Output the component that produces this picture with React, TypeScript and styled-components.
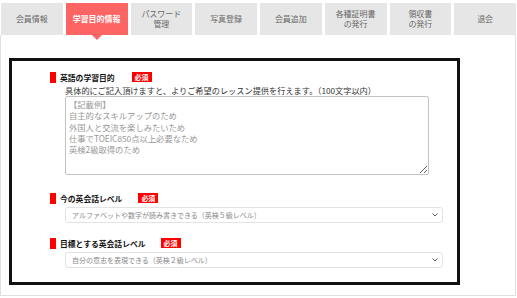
import React from 'react';
import styled, { createGlobalStyle } from 'styled-components';

const GlobalStyle = createGlobalStyle`
  html, body {
    margin: 0;
    padding: 0;
    background: #fff;
  }
  body {
    font-family: "Noto Sans CJK JP", "Noto Sans", sans-serif;
    color: #333;
  }
`;

const Page = styled.div`
  width: 517px;
  padding-top: 3px;
  box-sizing: border-box;
`;

const Tabs = styled.div`
  display: grid;
  grid-template-columns: repeat(8, 1fr);
  column-gap: 3px;
  margin: 0 1px 0 1px;
  height: 32px;
`;

const Tab = styled.div<{ $active?: boolean }>`
  position: relative;
  display: flex;
  align-items: center;
  justify-content: center;
  text-align: center;
  font-size: 8px;
  line-height: 10px;
  background: ${(p) => (p.$active ? '#fd6464' : '#e6e6e6')};
  color: ${(p) => (p.$active ? '#fff' : '#666')};
  font-weight: ${(p) => (p.$active ? 700 : 400)};

  &::after {
    content: '';
    display: ${(p) => (p.$active ? 'block' : 'none')};
    position: absolute;
    left: 50%;
    bottom: -5px;
    margin-left: -5px;
    border-left: 5px solid transparent;
    border-right: 5px solid transparent;
    border-top: 5px solid #fd6464;
  }
`;

const Panel = styled.div`
  border: 1px solid #e0e0e0;
  border-top: none;
  margin-right: 1px;
  padding: 23px 8px 10px 8px;
`;

const FormBox = styled.div`
  width: 451px;
  height: 227px;
  box-sizing: border-box;
  border: 3px solid #111;
  padding: 10px 0 0 38px;
`;

const Section = styled.div<{ $gap?: number }>`
  margin-top: ${(p) => p.$gap ?? 0}px;
`;

const LabelRow = styled.div`
  display: flex;
  align-items: center;
  height: 12px;
`;

const Marker = styled.span`
  width: 6px;
  height: 11px;
  background: #f00;
  margin-right: 4px;
`;

const Label = styled.span`
  font-size: 7.8px;
  font-weight: 700;
  color: #111;
`;

const Required = styled.span<{ $gap: number }>`
  margin-left: ${(p) => p.$gap}px;
  background: #f00;
  color: #fff;
  font-size: 7px;
  font-weight: 700;
  line-height: 10px;
  padding: 0 3px;
`;

const Note = styled.div`
  margin: 1px 0 0 15px;
  font-size: 8.2px;
  line-height: 12px;
  color: #333;
`;

const TextBox = styled.textarea`
  display: block;
  margin-left: 15px;
  width: 364px;
  height: 79px;
  box-sizing: border-box;
  border: 1px solid #c4c4c4;
  border-radius: 2px;
  padding: 2px 3px;
  font-family: inherit;
  font-size: 8.3px;
  line-height: 11.3px;
  color: #333;
  &::placeholder {
    color: #999;
  }
`;

const SelectWrap = styled.div`
  position: relative;
  margin: 3px 0 0 15px;
  width: 378px;
  height: 16px;
`;

const Select = styled.select`
  display: block;
  appearance: none;
  width: 100%;
  height: 100%;
  box-sizing: border-box;
  border: 1px solid #e3e3e3;
  border-radius: 3px;
  background: #fff;
  padding: 0 0 0 6px;
  font-family: inherit;
  font-size: 7px;
  color: #888;
  outline: none;
`;

const Chevron = styled.svg`
  position: absolute;
  right: 5px;
  top: 6px;
  pointer-events: none;
`;

const tabs = [
  ['会員情報'],
  ['学習目的情報'],
  ['パスワード', '管理'],
  ['写真登録'],
  ['会員追加'],
  ['各種証明書', 'の発行'],
  ['領収書', 'の発行'],
  ['退会'],
];

const LevelSelect = ({ value }: { value: string }) => (
  <SelectWrap>
    <Select defaultValue={value}>
      <option>{value}</option>
    </Select>
    <Chevron width="6" height="4" viewBox="0 0 6 4">
      <path d="M0.5 0.5 L3 3 L5.5 0.5" fill="none" stroke="#555" strokeWidth="1" />
    </Chevron>
  </SelectWrap>
);

export default function App() {
  return (
    <Page>
      <GlobalStyle />
      <Tabs>
        {tabs.map((t, i) => (
          <Tab key={i} $active={i === 1}>
            <span>
              {t.map((line, j) => (
                <React.Fragment key={j}>
                  {j > 0 && <br />}
                  {line}
                </React.Fragment>
              ))}
            </span>
          </Tab>
        ))}
      </Tabs>
      <Panel>
        <FormBox>
          <Section>
            <LabelRow>
              <Marker />
              <Label>英語の学習目的</Label>
              <Required $gap={17}>必須</Required>
            </LabelRow>
            <Note>具体的にご記入頂けますと、よりご希望のレッスン提供を行えます。（100文字以内）</Note>
            <TextBox
              placeholder={'【記載例】\n自主的なスキルアップのため\n外国人と交流を楽しみたいため\n仕事でTOEIC850点以上必要なため\n英検2級取得のため'}
            />
          </Section>
          <Section $gap={17}>
            <LabelRow>
              <Marker />
              <Label>今の英会話レベル</Label>
              <Required $gap={16}>必須</Required>
            </LabelRow>
            <LevelSelect value="アルファベットや数字が読み書きできる（英検５級レベル）" />
          </Section>
          <Section $gap={14}>
            <LabelRow>
              <Marker />
              <Label>目標とする英会話レベル</Label>
              <Required $gap={15}>必須</Required>
            </LabelRow>
            <LevelSelect value="自分の意志を表現できる（英検２級レベル）" />
          </Section>
        </FormBox>
      </Panel>
    </Page>
  );
}
